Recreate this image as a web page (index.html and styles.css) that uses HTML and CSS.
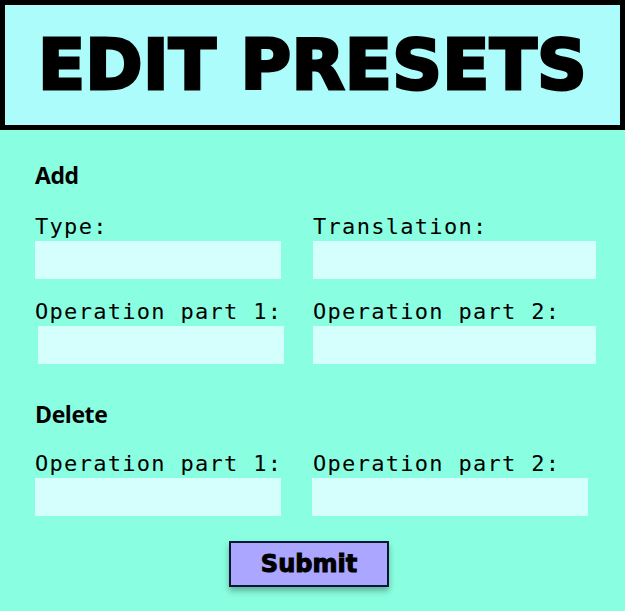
FILE: index.html
```html
<!DOCTYPE html>
<html lang="en">
<head>
<meta charset="utf-8">
<title>Edit Presets</title>
<link rel="stylesheet" href="styles.css">
</head>
<body>
<header class="banner">
  <h1 class="banner-title">EDIT PRESETS</h1>
</header>
<main class="panel">
  <section class="group group--add">
    <h2 class="group-title">Add</h2>
    <div class="fields">
      <label class="field"><span class="field-label">Type:</span><input class="field-input" type="text"></label>
      <label class="field"><span class="field-label">Translation:</span><input class="field-input" type="text"></label>
      <label class="field"><span class="field-label">Operation part 1:</span><input class="field-input field-input--nudge" type="text"></label>
      <label class="field"><span class="field-label">Operation part 2:</span><input class="field-input" type="text"></label>
    </div>
  </section>
  <section class="group group--delete">
    <h2 class="group-title">Delete</h2>
    <div class="fields">
      <label class="field"><span class="field-label">Operation part 1:</span><input class="field-input" type="text"></label>
      <label class="field"><span class="field-label">Operation part 2:</span><input class="field-input field-input--short" type="text"></label>
    </div>
  </section>
  <div class="actions">
    <button class="submit" type="button">Submit</button>
  </div>
</main>
</body>
</html>
```
FILE: styles.css
```css
* { box-sizing: border-box; }

html, body {
  margin: 0;
  padding: 0;
  background: #8afee0;
  height: 611px;
  overflow: hidden;
}

.banner {
  height: 130px;
  border: 5px solid #000;
  background: #adfcfc;
  display: flex;
  align-items: center;
  justify-content: center;
}

.banner-title {
  margin: 0;
  font-family: "DejaVu Sans", sans-serif;
  font-weight: 700;
  font-size: 69px;
  line-height: 69px;
  letter-spacing: 0.3px;
  color: #000;
  -webkit-text-stroke: 3px #000;
}

.panel {
  padding: 30px 0 0 35px;
}

.group-title {
  margin: 0;
  font-family: "Open Sans", sans-serif;
  font-weight: 700;
  font-size: 23px;
  line-height: 30px;
  letter-spacing: -0.4px;
  color: #000;
}

.group--add .fields { margin-top: 23px; }
.group--delete { margin-top: 35px; }
.group--delete .fields { margin-top: 21px; }

.fields {
  display: grid;
  grid-template-columns: 246px 283px;
  column-gap: 32px;
  row-gap: 19px;
}

.field {
  display: flex;
  flex-direction: column;
}

.field-label {
  font-family: "DejaVu Sans Mono", monospace;
  font-size: 22px;
  line-height: 28px;
  letter-spacing: 1.3px;
  color: #000;
  white-space: nowrap;
}

.field-input {
  display: block;
  width: 100%;
  height: 38px;
  border: none;
  margin: 0;
  padding: 0 8px;
  background: #d4fffc;
  outline: none;
}

.field-input--nudge { margin-left: 3px; }
.field-input--short { width: 276px; margin-left: -1px; }

.actions {
  display: flex;
  justify-content: center;
  margin-top: 25px;
  padding-right: 42px;
}

.submit {
  width: 160px;
  height: 46px;
  border: 2px solid #0b1633;
  background: #aba6ff;
  box-shadow: 0 4px 6px rgba(0, 0, 0, 0.3);
  font-family: "DejaVu Sans", sans-serif;
  font-weight: 700;
  font-size: 24px;
  color: #000;
  -webkit-text-stroke: 1px #000;
  padding: 0;
  cursor: pointer;
}
```
